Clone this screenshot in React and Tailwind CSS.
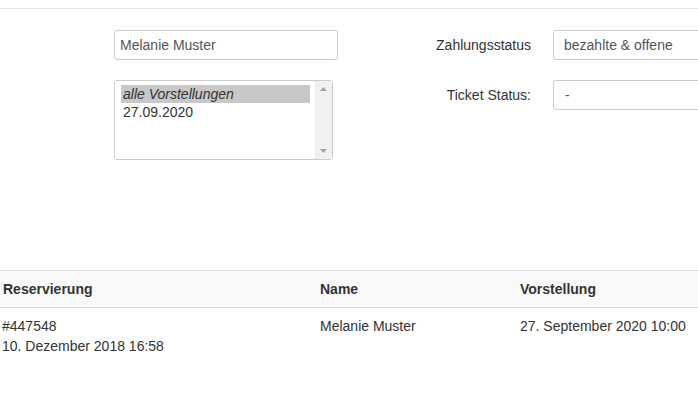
import React from 'react';

const font = { fontFamily: '"Liberation Sans", Arial, sans-serif' };

function FakeListBox() {
  return (
    <div className="relative h-[80px] w-[219px] rounded-[3px] border border-[#cccccc] bg-white">
      {/* Options */}
      <div className="pl-[6px] pr-[22px] pt-[4px] text-[14px] leading-[18px] text-[#333]">
        <div className="h-[18px] bg-[#c8c8c8] px-[2px] italic">alle Vorstellungen</div>
        <div className="h-[18px] px-[2px]">27.09.2020</div>
      </div>

      {/* Scrollbar */}
      <div className="absolute right-0 top-0 flex h-full w-[17px] flex-col items-center justify-between bg-[#f1f1f1] py-[6px]">
        <svg width="7" height="4" viewBox="0 0 7 4">
          <polygon points="3.5,0 7,4 0,4" fill="#a3a3a3" />
        </svg>
        <svg width="7" height="4" viewBox="0 0 7 4">
          <polygon points="0,0 7,0 3.5,4" fill="#a3a3a3" />
        </svg>
      </div>
    </div>
  );
}

function App() {
  return (
    <div className="h-[404px] w-full overflow-hidden bg-white text-[14px] text-[#333]" style={font}>
      {/* Top rule */}
      <div className="h-[9px] border-b border-[#e5e5e5]" />

      {/* Filter form */}
      <div className="flex pt-[21px]">
        <div className="ml-[114px] flex w-[224px] shrink-0 flex-col gap-[20px]">
          <div className="flex h-[30px] items-center rounded-[3px] border border-[#cccccc] px-[5px] text-[#555]">
            Melanie Muster
          </div>
          <FakeListBox />
        </div>

        <div className="flex shrink-0 flex-col gap-[20px]">
          <div className="flex h-[30px] items-center">
            <div className="w-[194px] shrink-0 pr-[1px] text-right">Zahlungsstatus</div>
            <div className="ml-[21px] flex h-[30px] w-[200px] shrink-0 items-center rounded-[3px] border border-[#cccccc] px-[10px] text-[#555]">
              bezahlte &amp; offene
            </div>
          </div>
          <div className="flex h-[30px] items-center">
            <div className="w-[194px] shrink-0 pr-[1px] text-right">Ticket Status:</div>
            <div className="ml-[21px] flex h-[30px] w-[200px] shrink-0 items-center rounded-[3px] border border-[#cccccc] px-[11px] text-[#555]">
              -
            </div>
          </div>
        </div>
      </div>

      {/* Reservations table */}
      <div className="mt-[110px]">
        <div className="grid h-[38px] grid-cols-[317px_200px_1fr] items-center border-y border-[#dddddd] bg-[#f9f9f9] font-bold">
          <div className="pl-[3px]">Reservierung</div>
          <div className="pl-[3px]">Name</div>
          <div className="pl-[3px]">Vorstellung</div>
        </div>
        <div className="grid grid-cols-[317px_200px_1fr] pt-[8px] leading-[20px]">
          <div className="pl-[2px]">
            <div>#447548</div>
            <div>10. Dezember 2018 16:58</div>
          </div>
          <div className="pl-[3px]">Melanie Muster</div>
          <div className="pl-[3px] whitespace-nowrap">27. September 2020 10:00</div>
        </div>
      </div>
    </div>
  );
}

export default App;
